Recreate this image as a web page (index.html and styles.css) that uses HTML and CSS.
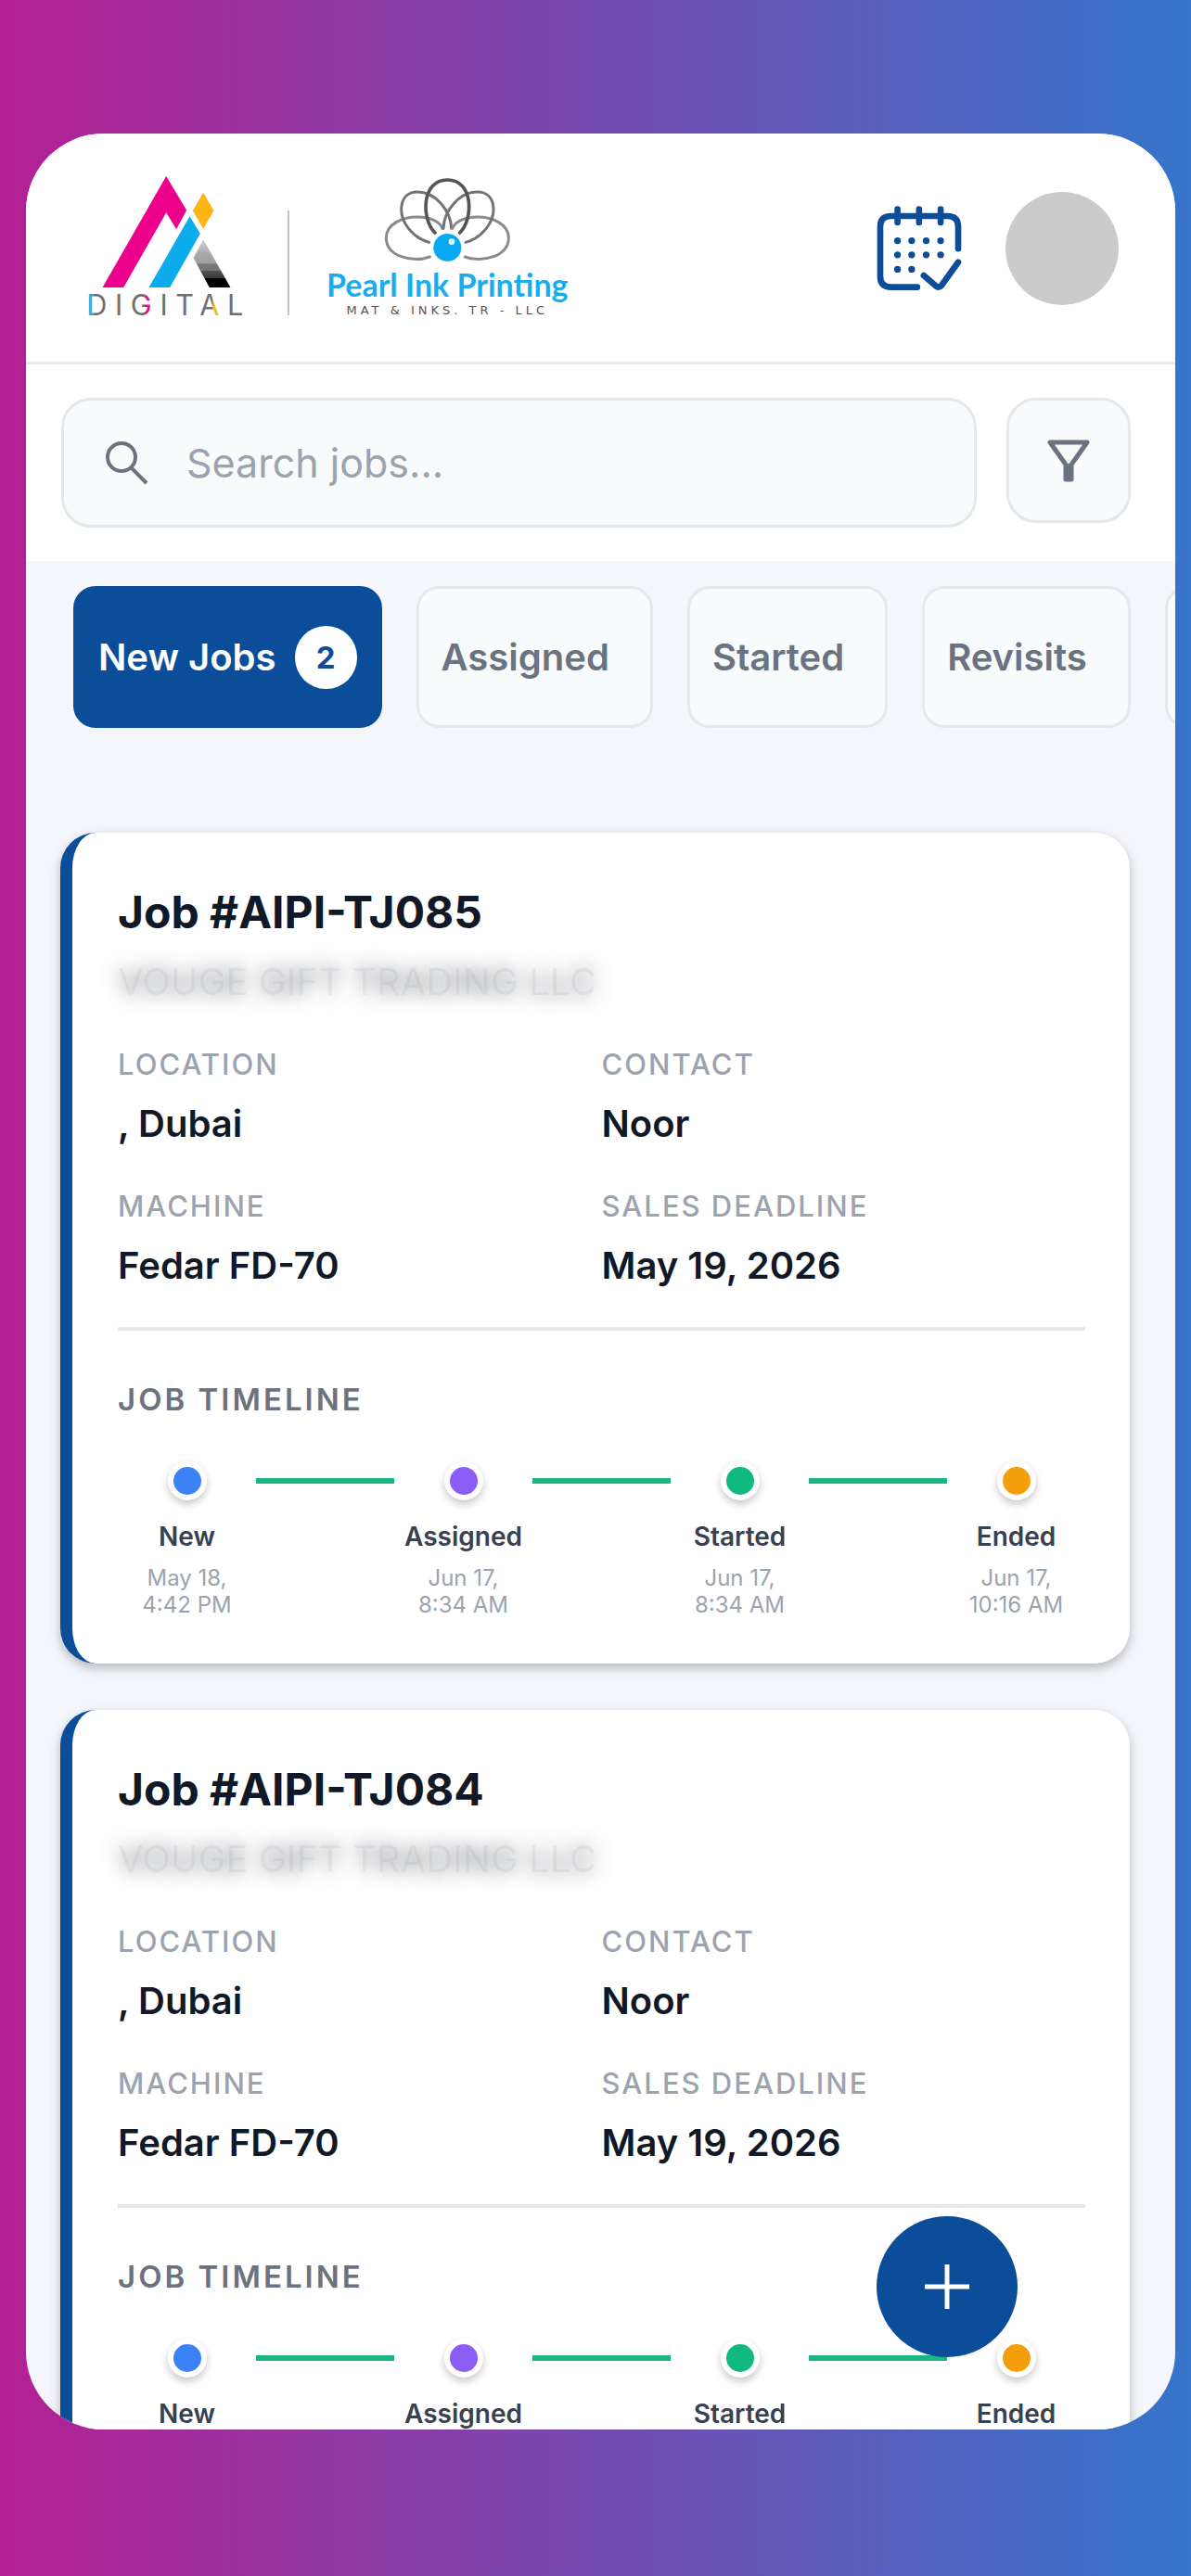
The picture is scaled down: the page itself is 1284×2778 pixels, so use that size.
FILE: index.html
```html
<!DOCTYPE html>
<html lang="en">
<head>
    <meta charset="UTF-8">
    <meta name="viewport" content="width=device-width, initial-scale=1.0">
    <title>Jobs - Pearl Ink Printing</title>
    <link rel="stylesheet" href="styles.css">
</head>
<body>

    <div class="screen">
        <!-- Header with both company logos -->
        <header class="header">
            <svg class="logo-digital" viewBox="40 45 530 495" role="img" aria-label="AI Digital">
                <defs>
                    <linearGradient id="shade" x1="0" y1="0" x2="0" y2="1">
                        <stop offset="0" stop-color="#d2d2d4"/>
                        <stop offset=".3" stop-color="#a9a9ab"/>
                        <stop offset=".5" stop-color="#a0a0a2"/>
                        <stop offset=".51" stop-color="#77777a"/>
                        <stop offset=".65" stop-color="#77777a"/>
                        <stop offset=".66" stop-color="#505052"/>
                        <stop offset=".8" stop-color="#3a3a3a"/>
                        <stop offset=".81" stop-color="#000"/>
                    </linearGradient>
                    <linearGradient id="letters" gradientUnits="userSpaceOnUse" x1="40" y1="0" x2="560" y2="0">
                        <stop offset=".04" stop-color="#35a9d6"/>
                        <stop offset=".05" stop-color="#6f6f72"/>
                        <stop offset=".36" stop-color="#6f6f72"/>
                        <stop offset=".37" stop-color="#e0128a"/>
                        <stop offset=".42" stop-color="#e0128a"/>
                        <stop offset=".43" stop-color="#6f6f72"/>
                        <stop offset=".78" stop-color="#6f6f72"/>
                        <stop offset=".79" stop-color="#e6c01c"/>
                        <stop offset=".86" stop-color="#e6c01c"/>
                        <stop offset=".87" stop-color="#6f6f72"/>
                    </linearGradient>
                </defs>
                <polygon fill="#ec008c" points="298,60 364,170 331,232 298,178 160,420 92,420"/>
                <polygon fill="#fdb515" points="418,113 452,172 418,230 384,172"/>
                <polygon fill="#0cacec" points="374,190 408,246 310,420 242,420"/>
                <polygon fill="url(#shade)" points="418,265 506,420 438,420 386,325"/>
                <text class="digital-text" x="40" y="510" fill="url(#letters)">DIGITAL</text>
            </svg>

            <span class="logo-divider"></span>

            <div class="logo-pearl">
                <svg class="flower" viewBox="220 54 408 276" aria-hidden="true">
                    <g fill="none" stroke-width="9" stroke-linecap="round">
                        <g id="petals">
                            <path stroke="#8b8b8d" d="M368 312C310 332 228 310 227 251C227 205 280 183 328 183C370 183 400 197 409 220"/>
                            <path stroke="#737375" d="M366 265C312 250 275 200 276 158C277 118 300 102 328 102C385 102 436 160 438 220"/>
                        </g>
                        <use href="#petals" transform="translate(850 0) scale(-1 1)"/>
                        <path stroke="#555557" stroke-width="11" d="M385 234C340 190 340 63 425 63C510 63 510 190 465 234"/>
                    </g>
                    <circle cx="425" cy="282" r="45" fill="#08a9f0"/>
                    <circle cx="439" cy="263" r="10" fill="#d8f2ff"/>
                </svg>
                <span class="pearl-name">Pearl Ink Printing</span>
                <span class="pearl-sub">MAT &amp; INKS. TR - LLC</span>
            </div>

            <button class="icon-button" type="button" aria-label="Schedule">
                <svg class="calendar" viewBox="136 149 277 277" fill="none" stroke="#0d4d98" stroke-width="20" stroke-linecap="round" stroke-linejoin="round">
                    <path d="M401 288V217Q401 182 366 182H183Q148 182 148 217V378Q148 413 183 413H268"/>
                    <path d="M204 160V203M274 160V203M344 160V203"/>
                    <path d="M289 375L328 409Q338 417 347 407L401 332"/>
                    <path stroke-width="22" d="M204 262h0M250 262h0M297 262h0M344 262h0M204 308h0M250 308h0M297 308h0M344 308h0M204 355h0M250 355h0"/>
                </svg>
            </button>
            <button class="avatar" type="button" aria-label="Profile"></button>
        </header>

        <!-- Search -->
        <form class="search-row">
            <label class="search-box" for="search">
                <svg class="search-icon" viewBox="0 0 48 48" fill="none" stroke="#6b7280" stroke-width="4">
                    <circle cx="18" cy="18" r="15"/>
                    <path d="M28 29L45 46"/>
                </svg>
                <input type="search" id="search" placeholder="Search jobs..." aria-label="Search jobs">
            </label>
            <button class="filter" type="button" aria-label="Filter jobs">
                <svg class="filter-icon" viewBox="0 0 48 48">
                    <path fill="none" stroke="#6b7280" stroke-width="5" stroke-linejoin="round" d="M4 4H44L27 28V44H21V28Z"/>
                    <path fill="#6b7280" d="M20 27H28V45H20Z"/>
                </svg>
            </button>
        </form>

        <!-- Status tabs -->
        <nav class="tabs">
            <button class="tab active" type="button">New Jobs<span class="count">2</span></button>
            <button class="tab" type="button">Assigned<span></span></button>
            <button class="tab" type="button">Started<span></span></button>
            <button class="tab" type="button">Revisits<span></span></button>
            <button class="tab" type="button" aria-label="More"><span></span></button>
        </nav>

        <main class="jobs">
            <article class="card">
                <h2>Job #AIPI-TJ085</h2>
                <p class="customer">VOUGE GIFT TRADING LLC</p>
                <dl class="details">
                    <div><dt>LOCATION</dt><dd>, Dubai</dd></div>
                    <div><dt>CONTACT</dt><dd>Noor</dd></div>
                    <div><dt>MACHINE</dt><dd>Fedar FD-70</dd></div>
                    <div><dt>SALES DEADLINE</dt><dd>May 19, 2026</dd></div>
                </dl>
                <section class="timeline">
                    <h3>JOB TIMELINE</h3>
                    <div class="steps">
                        <div class="step"><i class="dot new"></i><b>New</b><small>May 18,<br>4:42 PM</small></div>
                        <span class="line"></span>
                        <div class="step"><i class="dot assigned"></i><b>Assigned</b><small>Jun 17,<br>8:34 AM</small></div>
                        <span class="line"></span>
                        <div class="step"><i class="dot started"></i><b>Started</b><small>Jun 17,<br>8:34 AM</small></div>
                        <span class="line"></span>
                        <div class="step"><i class="dot ended"></i><b>Ended</b><small>Jun 17,<br>10:16 AM</small></div>
                    </div>
                </section>
            </article>

            <article class="card">
                <h2>Job #AIPI-TJ084</h2>
                <p class="customer">VOUGE GIFT TRADING LLC</p>
                <dl class="details">
                    <div><dt>LOCATION</dt><dd>, Dubai</dd></div>
                    <div><dt>CONTACT</dt><dd>Noor</dd></div>
                    <div><dt>MACHINE</dt><dd>Fedar FD-70</dd></div>
                    <div><dt>SALES DEADLINE</dt><dd>May 19, 2026</dd></div>
                </dl>
                <section class="timeline">
                    <h3>JOB TIMELINE</h3>
                    <div class="steps">
                        <div class="step"><i class="dot new"></i><b>New</b></div>
                        <span class="line"></span>
                        <div class="step"><i class="dot assigned"></i><b>Assigned</b></div>
                        <span class="line"></span>
                        <div class="step"><i class="dot started"></i><b>Started</b></div>
                        <span class="line"></span>
                        <div class="step"><i class="dot ended"></i><b>Ended</b></div>
                    </div>
                </section>
            </article>
        </main>

        <button class="add-job" type="button" aria-label="Add job">
            <svg class="plus" viewBox="0 0 48 48" fill="none" stroke="#fff" stroke-width="5">
                <path d="M24 0V48M0 24H48"/>
            </svg>
        </button>
    </div>

</body>
</html>
```
FILE: styles.css
```css
* {
    box-sizing: border-box;
}
body {
    margin: 0;
    height: 100vh;
    padding: 144px 17px 158px 28px;
    font-family: Inter, "Liberation Sans", sans-serif;
    background: linear-gradient(90deg, #b52093, #3575cb);
    overflow: hidden;
}
button {
    font-family: inherit;
    cursor: pointer;
}
h2, h3, p, dl, dd {
    margin: 0;
}
.screen {
    position: relative;
    display: flex;
    flex-direction: column;
    height: 100%;
    background-color: #f4f6fb;
    border-radius: 84px;
    overflow: hidden;
}

/* Header */
.header {
    display: flex;
    flex: none;
    align-items: center;
    padding: 41px 61px 40px 65px;
    background-color: #fff;
    border-bottom: 3px solid #e8e8ea;
}
.logo-digital {
    width: 177px;
    height: 165px;
    overflow: visible;
}
.digital-text {
    font-size: 92px;
    font-weight: 400;
    letter-spacing: 26px;
}
.logo-divider {
    align-self: flex-end;
    width: 2px;
    height: 113px;
    margin: 0 40px 10px 40px;
    background-color: #c4c4c6;
}
.logo-pearl {
    display: flex;
    flex-direction: column;
    align-items: center;
}
.flower {
    width: 136px;
    height: 92px;
}
.pearl-name {
    margin-top: 6px;
    font: 700 34px/36px Lato, sans-serif;
    color: #19adf0;
}
.pearl-sub {
    font: 400 13px/20px "DejaVu Sans", sans-serif;
    letter-spacing: 4px;
    color: #555;
}
.icon-button {
    margin-left: auto;
    padding: 0;
    border: none;
    background: none;
}
.calendar {
    display: block;
    width: 92px;
    height: 92px;
}
.avatar {
    width: 122px;
    height: 122px;
    margin-left: 47px;
    border: none;
    border-radius: 50%;
    background-color: #cbcbcb;
}

/* Search */
.search-row {
    display: flex;
    flex: none;
    align-items: flex-start;
    gap: 32px;
    padding: 36px 48px 36px 38px;
    background-color: #fff;
}
.search-box {
    display: flex;
    flex: 1;
    align-items: center;
    gap: 40px;
    height: 140px;
    padding: 0 44px;
    border: 3px solid #e5e8eb;
    border-radius: 32px;
    background-color: #f8fbfc;
}
.search-icon {
    flex: none;
    width: 48px;
    height: 48px;
}
.search-box input {
    flex: 1;
    min-width: 0;
    padding: 0;
    border: none;
    outline: none;
    background: none;
    font-family: inherit;
    font-size: 43px;
    color: #111827;
}
.search-box input::placeholder {
    color: #9ca3af;
}
.filter {
    display: flex;
    align-items: center;
    justify-content: center;
    width: 134px;
    height: 135px;
    padding: 0;
    border: 3px solid #e5e8eb;
    border-radius: 32px;
    background-color: #f8fafb;
}
.filter-icon {
    width: 48px;
    height: 48px;
}

/* Tabs */
.tabs {
    display: flex;
    flex: none;
    gap: 37px;
    padding: 27px 0 0 51px;
    overflow: hidden;
}
.tab {
    display: flex;
    flex: none;
    align-items: center;
    gap: 20px;
    min-width: 120px;
    height: 153px;
    padding: 0 24px;
    border: 3px solid #e6e8ec;
    border-radius: 24px;
    background-color: #f8fbfc;
    font-size: 40px;
    font-weight: 600;
    color: #6b7280;
}
.tab.active {
    border-color: #0b4d99;
    background-color: #0b4d99;
    color: #fff;
}
.count {
    width: 67px;
    border-radius: 34px;
    background-color: #fff;
    font-size: 33px;
    font-weight: 700;
    line-height: 68px;
    text-align: center;
    color: #0b4d99;
}

/* Job cards */
.jobs {
    display: flex;
    flex-direction: column;
    gap: 50px;
    padding: 113px 49px 0 37px;
}
.card {
    flex: none;
    padding: 56px 48px 49px 49px;
    border-left: 13px solid #0b4d99;
    border-radius: 38px;
    background-color: #fff;
    box-shadow: 0 5px 12px rgba(0, 0, 0, 0.25);
}
.card h2 {
    font-size: 48px;
    font-weight: 700;
    line-height: 60px;
    color: #111827;
}
.customer {
    margin-top: 20px;
    font-size: 40px;
    line-height: 50px;
    color: rgba(107, 114, 128, 0.1);
    text-shadow: 0 0 20px rgba(75, 80, 90, 0.75);
}
.details {
    display: grid;
    grid-template-columns: 1fr 1fr;
    row-gap: 45px;
    margin-top: 44px;
    padding-bottom: 42px;
    border-bottom: 4px solid #e8e8ea;
}
.details dt {
    font-size: 31px;
    font-weight: 500;
    line-height: 40px;
    letter-spacing: 2px;
    color: #9ca3af;
}
.details dd {
    margin-top: 20px;
    font-size: 40px;
    font-weight: 600;
    line-height: 48px;
    color: #111827;
}
.timeline h3 {
    margin-top: 52px;
    font-size: 33px;
    font-weight: 600;
    line-height: 44px;
    letter-spacing: 3px;
    color: #6b7280;
}
.steps {
    display: flex;
    align-items: flex-start;
    margin-top: 45px;
}
.step {
    display: flex;
    flex: 1 1 0;
    flex-direction: column;
    align-items: center;
    min-width: 0;
    text-align: center;
}
.step b {
    margin-top: 21px;
    font-size: 28px;
    font-weight: 600;
    line-height: 36px;
    color: #374151;
}
.step small {
    margin-top: 12px;
    font-size: 24px;
    line-height: 29px;
    color: #9ca3af;
}
.dot {
    width: 42px;
    height: 42px;
    border: 6px solid #fff;
    border-radius: 50%;
    box-shadow: 0 4px 8px rgba(0, 0, 0, 0.22);
}
.new {
    background-color: #3b82f6;
}
.assigned {
    background-color: #8b5cf6;
}
.started {
    background-color: #10b981;
}
.ended {
    background-color: #f59e0b;
}
.line {
    flex: 1 1 0;
    height: 6px;
    margin-top: 18px;
    background-color: #1cb583;
}

/* Floating add button */
.add-job {
    position: absolute;
    right: 170px;
    bottom: 78px;
    display: flex;
    align-items: center;
    justify-content: center;
    width: 152px;
    height: 152px;
    padding: 0;
    border: none;
    border-radius: 50%;
    background-color: #0b4d99;
}
.plus {
    width: 48px;
    height: 48px;
}
```
